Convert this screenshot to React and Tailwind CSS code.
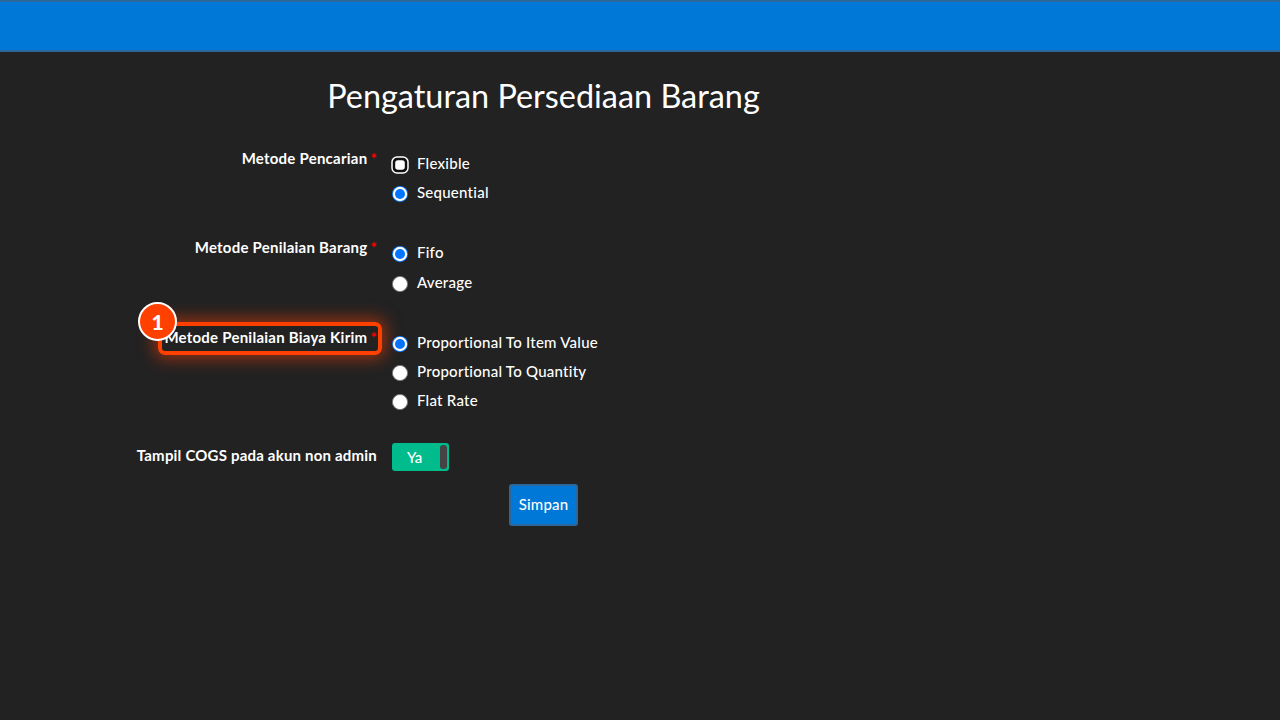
import React from 'react';

const Radio = ({ variant }) => {
  if (variant === 'focused') {
    return (
      <svg width="18" height="18" viewBox="0 0 18 18" className="mt-px shrink-0">
        <rect x="1" y="1" width="16" height="16" rx="5" fill="#101010" stroke="#ffffff" strokeWidth="1.5" />
        <rect x="4.2" y="4.2" width="9.6" height="9.6" rx="2.8" fill="#ffffff" />
      </svg>
    );
  }
  if (variant === 'checked') {
    return (
      <svg width="18" height="18" viewBox="0 0 18 18" className="shrink-0">
        <circle cx="9" cy="9" r="8" fill="#0075ff" />
        <circle cx="9" cy="9" r="7.2" fill="#ffffff" />
        <circle cx="9" cy="9" r="5" fill="#0075ff" />
      </svg>
    );
  }
  return (
    <svg width="18" height="18" viewBox="0 0 18 18" className="shrink-0">
      <circle cx="9" cy="9" r="7.6" fill="#ffffff" stroke="#767676" strokeWidth="1" />
    </svg>
  );
};

const Option = ({ label, variant }) => (
  <label className="flex h-[29px] items-center gap-2 text-[15px] font-medium tracking-[0.25px] text-white">
    <Radio variant={variant} />
    <span className="-mt-[3px] whitespace-nowrap">{label}</span>
  </label>
);

const Label = ({ children, required }) => (
  <div className="flex w-[377px] shrink-0 justify-end whitespace-nowrap text-[15px] font-bold leading-[22px] tracking-[0.24px] text-white">
    {children}
    {required && <span className="ml-[3px] text-[#ff0000]">*</span>}
  </div>
);

const App = () => {
  return (
    <div className="h-[720px] w-[1280px] overflow-hidden bg-[#222222] font-['Lato',sans-serif]">
      <div className="h-[52px] border-y-2 border-[#2b679b] bg-[#0078d7]" />

      <div className="w-[1087px]">
        <h1 className="h-[95px] pt-[22px] text-center text-[32.4px] leading-[44px] text-white">
          Pengaturan Persediaan Barang
        </h1>

        <div className="flex h-[89px] gap-[14px]">
          <Label required>Metode Pencarian</Label>
          <div className="pt-[3px]">
            <Option label="Flexible" variant="focused" />
            <Option label="Sequential" variant="checked" />
          </div>
        </div>

        <div className="flex h-[90px] gap-[14px]">
          <Label required>Metode Penilaian Barang</Label>
          <div className="flex flex-col gap-px pt-[3px]">
            <Option label="Fifo" variant="checked" />
            <Option label="Average" />
          </div>
        </div>

        <div className="relative flex h-[118px] gap-[14px]">
          <Label required>Metode Penilaian Biaya Kirim</Label>
          <div className="pt-[3px]">
            <Option label="Proportional To Item Value" variant="checked" />
            <Option label="Proportional To Quantity" />
            <Option label="Flat Rate" />
          </div>

          {/* Step highlight */}
          <div className="absolute left-[158px] -top-[4px] h-[33px] w-[224px] rounded-[7px] border-4 border-[#ff4000] shadow-[0_0_16px_4px_rgba(255,64,0,0.5)]" />
          <div className="absolute left-[138px] -top-[24px] flex h-[39px] w-[39px] items-center justify-center rounded-full border-2 border-white bg-[#ff4000] text-[21px] font-black text-white">
            1
          </div>
        </div>

        <div className="flex h-[40px] gap-[15px]">
          <Label>
            <span className="tracking-[0.2px]">Tampil COGS pada akun non admin</span>
          </Label>
          <div className="-mt-px flex h-7 w-[57px] items-center justify-between rounded-[3px] bg-[#00bc8c] pl-[15px] pr-[2px] text-[15px] font-medium text-white">
            <span>Ya</span>
            <span className="h-6 w-[7px] rounded-[3px] bg-[#444444]" />
          </div>
        </div>

        <div className="flex justify-center">
          <button className="h-[42px] w-[69px] rounded-[3px] border-2 border-[#2b679b] bg-[#0078d7] pb-0.5 text-[15px] font-medium tracking-[0.2px] text-white">
            Simpan
          </button>
        </div>
      </div>
    </div>
  );
};

export default App;
